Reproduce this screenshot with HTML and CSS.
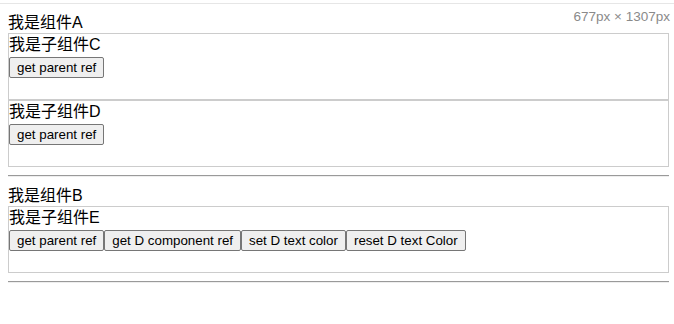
FILE: index.html
```html
<!DOCTYPE html>
<html lang="zh-CN">
<head>
    <meta charset="UTF-8">
    <meta name="viewport" content="width=device-width, initial-scale=1.0">
    <title>ref demo</title>
    <link rel="stylesheet" href="styles.css">
</head>
<body>
    <div class="topline"></div>
    <div class="size-tip">677px × 1307px</div>
    <div class="page">
        <div class="parent">
            <div class="title">我是组件A</div>
            <div class="child">
                <div class="title">我是子组件C</div>
                <div class="btns"><button>get parent ref</button></div>
            </div>
            <div class="child">
                <div class="title">我是子组件D</div>
                <div class="btns"><button>get parent ref</button></div>
            </div>
        </div>
        <hr>
        <div class="parent">
            <div class="title">我是组件B</div>
            <div class="child">
                <div class="title">我是子组件E</div>
                <div class="btns"><button>get parent ref</button><button>get D component ref</button><button>set D text color</button><button>reset D text Color</button></div>
            </div>
        </div>
        <hr>
    </div>
</body>
</html>
```

FILE: styles.css
```css
body {
    margin: 0;
    font-family: "Liberation Sans", "Noto Sans CJK SC", sans-serif;
    font-size: 16px;
    color: #000;
    background: #fff;
}
.topline {
    margin-top: 3px;
    height: 1px;
    background: #e6e6e6;
}
.size-tip {
    position: absolute;
    top: 9px;
    right: 4px;
    font-size: 13.5px;
    color: #8a8a8a;
    font-family: "Liberation Sans", sans-serif;
}
.page {
    width: 661px;
    margin: 8px 0 0 8px;
}
.title {
    line-height: 21px;
}
.child {
    border: 1px solid #ccc;
    height: 65px;
}
.btns {
    display: flex;
    margin-top: 2px;
}
button {
    font-family: "Liberation Sans", sans-serif;
    font-size: 13.33px;
    line-height: 17px;
    padding: 1px 7px;
    color: #000;
    background: #efefef;
    border: 1px solid #767676;
    border-radius: 2px;
}
hr {
    margin: 8px 0;
    border: none;
    border-top: 1px solid #9a9a9a;
    border-bottom: 1px solid #eee;
}
```
